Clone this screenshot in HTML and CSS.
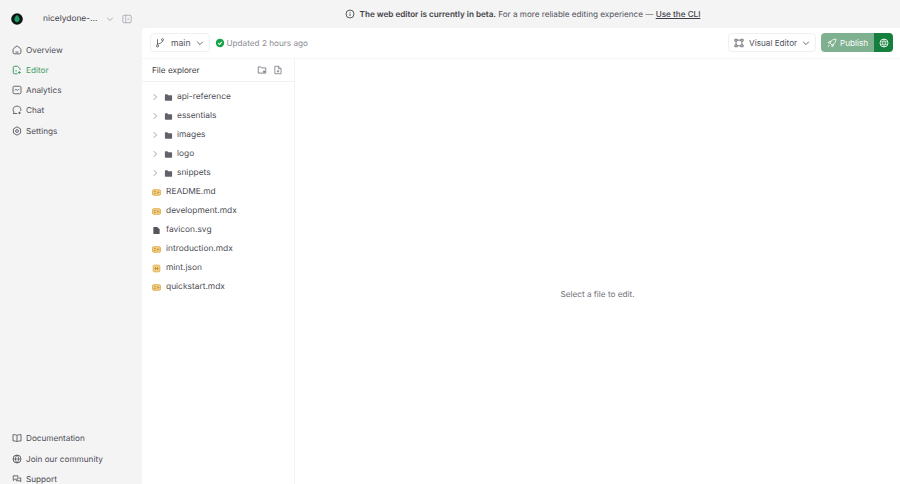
FILE: index.html
```html
<!DOCTYPE html>
<html lang="en">
<head>
<meta charset="utf-8">
<title>Editor</title>
<link rel="stylesheet" href="styles.css">
</head>
<body>
<svg class="defs" width="0" height="0" aria-hidden="true">
  <defs>
    <symbol id="chev-r" viewBox="0 0 10 10"><path d="M3.5 1.5 7 5 3.5 8.500" fill="none" stroke="currentColor" stroke-width="1"/></symbol>
    <symbol id="chev-d" viewBox="0 0 10 10"><path d="M1.500 3.500 5 7l3.500-3.500" fill="none" stroke="currentColor" stroke-width="1.100"/></symbol>
    <symbol id="folder" viewBox="0 0 10 10"><path d="M1 2.200c0-.4.300-.7.700-.7h2l1 1.100h3.600c.4 0 .7.300.7.700v4.500c0 .4-.3.700-.7.700H1.700c-.4 0-.7-.3-.7-.7z" fill="currentColor"/></symbol>
    <symbol id="md" viewBox="0 0 10 10"><rect x=".6" y="1.900" width="8.800" height="6.200" rx="1.300" fill="#f3d391" stroke="#e0a53c" stroke-width=".9"/><path d="M2.200 4h2M2.200 6h2M6 4v2M7.500 4v2" stroke="#b8801c" stroke-width=".9"/></symbol>
    <symbol id="json" viewBox="0 0 10 10"><rect x="1.300" y="1.300" width="7.400" height="7.400" rx="1.300" fill="#f3d391" stroke="#e0a53c" stroke-width=".9"/><path d="M3.800 3.200v3.600M6.200 3.200v3.600M3 5h4" stroke="#b8801c" stroke-width=".8"/></symbol>
    <symbol id="file" viewBox="0 0 10 10"><path d="M1.500 1.800c0-.5.300-.8.800-.8h3.500l2.700 2.700v4.500c0 .5-.3.800-.8.800H2.300c-.5 0-.8-.3-.8-.8z" fill="#55565c"/></symbol>
  </defs>
</svg>
<div class="app">
  <aside class="sidebar">
    <div class="org">
      <svg class="logo" viewBox="0 0 14 14"><circle cx="7" cy="7" r="6.800" fill="#0d1512"/><path d="M7 2.300C9.300 4.200 10.400 6.200 10 8c-.3 1.700-1.700 2.900-3 2.900S4.300 9.700 4 8C3.600 6.200 4.700 4.200 7 2.300z" fill="#1f9d66"/></svg>
      <span class="org-name">nicelydone-...</span>
      <svg class="org-chev"><use href="#chev-d"/></svg>
      <svg class="collapse" viewBox="0 0 12 12"><rect x="1" y="1.500" width="10" height="9" rx="1.500" fill="none" stroke="currentColor"/><path d="M4.500 1.500v9M8.300 4.500 6.800 6l1.500 1.500" fill="none" stroke="currentColor" stroke-width=".9"/></svg>
    </div>
    <nav class="nav">
      <a class="nav-item"><svg class="nav-icon" viewBox="0 0 12 12"><path d="M1.300 5.400c0-.5.200-.9.600-1.200L5 1.700c.6-.5 1.400-.5 2 0l3.100 2.500c.4.300.6.700.6 1.200v3.700c0 .9-.7 1.500-1.500 1.500H2.800c-.8 0-1.500-.6-1.500-1.500z M4.200 8.500h3.600" fill="none" stroke="currentColor"/></svg>Overview</a>
      <a class="nav-item active"><svg class="nav-icon" viewBox="0 0 12 12"><path d="M6.500 10.500H2.700c-.7 0-1.200-.5-1.200-1.200V2.700c0-.7.500-1.200 1.200-1.200h4l3 3v1.500" fill="none" stroke="currentColor" stroke-width="1.200"/><path d="M4 7h2M8.800 7.200v3.500M7 9h3.600" fill="none" stroke="currentColor" stroke-width="1.100"/></svg>Editor</a>
      <a class="nav-item"><svg class="nav-icon" viewBox="0 0 12 12"><rect x="1.200" y="1.500" width="9.600" height="9" rx="1.600" fill="none" stroke="currentColor"/><path d="M3.300 6.400 4.800 5l1.600 1.500L8.700 5" fill="none" stroke="currentColor" stroke-width=".9"/></svg>Analytics</a>
      <a class="nav-item"><svg class="nav-icon" viewBox="0 0 12 12"><path d="M6.300 10.200H1.500l.9-1.700C1.700 7.700 1.300 6.800 1.300 5.700 1.300 3.200 3.300 1.300 6 1.300s4.700 1.900 4.700 4.400c0 .5-.1 1-.3 1.500" fill="none" stroke="currentColor"/><path d="M9 8v3M7.500 9.500h3" stroke="currentColor"/></svg>Chat</a>
      <a class="nav-item"><svg class="nav-icon" viewBox="0 0 12 12"><path d="M6 1 10.300 3.500v5L6 11 1.700 8.500v-5z" fill="none" stroke="currentColor" stroke-linejoin="round"/><circle cx="6" cy="6" r="1.700" fill="none" stroke="currentColor"/></svg>Settings</a>
    </nav>
    <nav class="nav nav-bottom">
      <a class="nav-item"><svg class="nav-icon" viewBox="0 0 12 12"><path d="M6 3C5 2.200 3.500 2 1.200 2v7.500c2.300 0 3.800.2 4.800 1 1-.8 2.500-1 4.800-1V2C8.500 2 7 2.200 6 3zM6 3v7.500" fill="none" stroke="currentColor"/></svg>Documentation</a>
      <a class="nav-item"><svg class="nav-icon" viewBox="0 0 12 12"><circle cx="6" cy="6" r="4.800" fill="none" stroke="currentColor"/><path d="M1.200 6h9.600M6 1.200c-2.500 3-2.500 6.600 0 9.600 2.500-3 2.500-6.600 0-9.600z" fill="none" stroke="currentColor" stroke-width=".9"/></svg>Join our community</a>
      <a class="nav-item"><svg class="nav-icon" viewBox="0 0 12 12"><path d="M1.500 2.200h5.600v4H3.300L1.500 7.800z M8.400 4.800h2.100v4.500l-1.400-1.200H5V7.400" fill="none" stroke="currentColor"/></svg>Support</a>
    </nav>
  </aside>
  <div class="right">
    <div class="banner">
      <svg class="banner-icon" viewBox="0 0 12 12"><circle cx="6" cy="6" r="4.800" fill="none" stroke="currentColor"/><path d="M6 5.400v3M6 3.400v1" stroke="currentColor"/></svg>
      <span><strong>The web editor is currently in beta.</strong> For a more reliable editing experience — <a class="cli">Use the CLI</a></span>
    </div>
    <main class="panel">
      <header class="toolbar">
        <button class="btn branch">
          <svg class="btn-icon" viewBox="0 0 12 12"><path d="M3 1.500v6.300M9 3.200C9 5.500 7 6 5 6.700 3.800 7.100 3 7.700 3 8.500" fill="none" stroke="currentColor"/><circle cx="3" cy="9.500" r="1.300" fill="none" stroke="currentColor"/><circle cx="9" cy="2" r="1.200" fill="none" stroke="currentColor"/></svg>
          <span>main</span>
          <svg class="chev"><use href="#chev-d"/></svg>
        </button>
        <svg class="status-dot" viewBox="0 0 10 10"><circle cx="5" cy="5" r="4.200" fill="#16a34a"/><path d="M3.100 5.100 4.500 6.400 6.900 3.800" fill="none" stroke="#fff" stroke-width="1.100"/></svg>
        <span class="status">Updated 2 hours ago</span>
        <div class="toolbar-right">
          <button class="btn visual">
            <svg class="btn-icon" viewBox="0 0 12 12"><path d="M2.500 2.600h7M2.500 9.400h7M2.500 2.600v6.800M9.500 2.600v6.800" fill="none" stroke="currentColor" stroke-width=".9"/><path d="M1 1.500h2.800v2.200H1zM8.200 1.500H11v2.200H8.200zM1 8.300h2.800v2.200H1zM8.200 8.300H11v2.200H8.200z" fill="#fff" stroke="currentColor" stroke-width=".9"/></svg>
            <span>Visual Editor</span>
            <svg class="chev"><use href="#chev-d"/></svg>
          </button>
          <div class="publish">
            <button class="publish-main">
              <svg class="btn-icon" viewBox="0 0 12 12"><path d="M10.800 1.200C7.500 1.400 5 2.800 3.600 6l2.400 2.400c3.200-1.400 4.600-3.900 4.800-7.200zM3.600 6H1.400l1.500-1.900h1.900M6 8.400v2.200l1.900-1.500V7.200M2.800 8.300l-1.500 2.400" fill="none" stroke="currentColor"/></svg>
              <span>Publish</span>
            </button>
            <button class="publish-globe">
              <svg class="btn-icon" viewBox="0 0 12 12"><circle cx="6" cy="6" r="4.800" fill="none" stroke="currentColor"/><path d="M1.400 4.500h9.200M1.400 7.500h9.200M6 1.200c-2.200 3-2.200 6.600 0 9.600 2.200-3 2.200-6.600 0-9.600z" fill="none" stroke="currentColor" stroke-width=".8"/></svg>
            </button>
          </div>
        </div>
      </header>
      <div class="workspace">
        <section class="explorer">
          <div class="explorer-head">
            <span>File explorer</span>
            <span class="head-actions">
              <svg viewBox="0 0 12 12"><path d="M1.500 2.300h3l1 1.200h5v6.200h-9z M8.500 6.500v3M7 8h3" fill="none" stroke="currentColor"/></svg>
              <svg viewBox="0 0 12 12"><path d="M2.200 1.500h4.500l3 3v6h-7.500z M6.500 1.500v3h3M4.500 7.500h3M6 6v3" fill="none" stroke="currentColor" stroke-width=".9"/></svg>
            </span>
          </div>
          <ul class="tree">
            <li class="row"><svg class="tw"><use href="#chev-r"/></svg><svg class="ico dir"><use href="#folder"/></svg>api-reference</li>
            <li class="row"><svg class="tw"><use href="#chev-r"/></svg><svg class="ico dir"><use href="#folder"/></svg>essentials</li>
            <li class="row"><svg class="tw"><use href="#chev-r"/></svg><svg class="ico dir"><use href="#folder"/></svg>images</li>
            <li class="row"><svg class="tw"><use href="#chev-r"/></svg><svg class="ico dir"><use href="#folder"/></svg>logo</li>
            <li class="row"><svg class="tw"><use href="#chev-r"/></svg><svg class="ico dir"><use href="#folder"/></svg>snippets</li>
            <li class="row"><svg class="ico"><use href="#md"/></svg>README.md</li>
            <li class="row"><svg class="ico"><use href="#md"/></svg>development.mdx</li>
            <li class="row"><svg class="ico"><use href="#file"/></svg>favicon.svg</li>
            <li class="row"><svg class="ico"><use href="#md"/></svg>introduction.mdx</li>
            <li class="row"><svg class="ico"><use href="#json"/></svg>mint.json</li>
            <li class="row"><svg class="ico"><use href="#md"/></svg>quickstart.mdx</li>
          </ul>
        </section>
        <section class="empty">Select a file to edit.</section>
      </div>
    </main>
  </div>
</div>
</body>
</html>
```

FILE: styles.css
```css
* { box-sizing: border-box; }
html, body { margin: 0; height: 100%; overflow: hidden; }
body { font-family: Inter, "Liberation Sans", sans-serif; font-size: 8.2px; color: #52525b; background: #f4f4f5; text-rendering: geometricPrecision; }
.defs { position: absolute; }
.app { display: flex; height: 484px; overflow: hidden; }
.sidebar { width: 142px; flex: none; display: flex; flex-direction: column; padding: 10px 11px 0 12px; }
.org { display: flex; align-items: center; height: 17px; white-space: nowrap; }
.logo { width: 12px; height: 12px; margin-left: -1.500px; flex: none; }
.org-name { width: 57px; margin-left: 20.500px; color: #3f3f46; font-size: 8.400px; }
.org-chev { width: 8px; height: 8px; margin-left: 9px; color: #a1a1aa; flex: none; }
.collapse { width: 10px; height: 10px; margin-left: 8px; color: #a1a1aa; flex: none; }
.nav { display: flex; flex-direction: column; margin-top: 12.500px; }
.nav-bottom { margin-top: auto; margin-bottom: -5px; }
.nav-item { display: flex; align-items: center; gap: 4px; height: 20.250px; color: #4c4c54; white-space: nowrap; }
.nav-item.active { color: #3f9d62; }
.nav-icon { width: 10px; height: 10px; flex: none; }
.right { flex: 1; min-width: 0; display: flex; flex-direction: column; }
.banner { height: 28px; flex: none; display: flex; align-items: center; justify-content: center; gap: 5px; padding-left: 3px; font-size: 8.150px; color: #52525b; }
.banner strong { font-weight: 600; color: #3f3f46; }
.banner-icon { width: 10px; height: 10px; color: #3f3f46; }
.cli { font-weight: 500; text-decoration: underline; color: #3f3f46; }
.panel { flex: 1; min-height: 0; background: #fff; display: flex; flex-direction: column; border-top-left-radius: 3px; }
.toolbar { height: 31px; flex: none; display: flex; align-items: center; padding: 0 7px 1px 8px; border-bottom: 1px solid #f6f6f7; }
.btn { font: inherit; color: #52525b; display: flex; align-items: center; height: 19px; background: #fff; border: 1px solid #f0f0f1; border-radius: 4px; padding: 0 5px 0 4px; white-space: nowrap; }
.btn-icon { width: 10px; height: 10px; flex: none; }
.chev { width: 8px; height: 8px; flex: none; margin-left: auto; }
.branch { width: 60px; font-size: 8.600px; }
.branch span { margin-left: 6px; }
.status-dot { width: 10px; height: 10px; margin-left: 5px; flex: none; }
.status { margin-left: 1.500px; color: #8b8b93; }
.toolbar-right { margin-left: auto; display: flex; align-items: center; gap: 5px; }
.visual { width: 88px; padding-left: 5px; }
.visual span { margin-left: 5px; }
.publish { display: flex; height: 19px; border-radius: 4px; overflow: hidden; }
.publish-main, .publish-globe { font: inherit; border: 0; color: #fff; display: flex; align-items: center; padding: 0; white-space: nowrap; }
.publish-main { width: 53px; background: #7fb08f; padding-left: 6px; gap: 3px; }
.publish-globe { width: 19px; background: #15803d; justify-content: center; }
.workspace { flex: 1; min-height: 0; display: flex; }
.explorer { width: 153px; flex: none; border-right: 1px solid #f2f2f3; }
.explorer-head { height: 23px; display: flex; align-items: center; justify-content: space-between; padding: 0 11px 1px 10px; color: #3f3f46; border-bottom: 1px solid #f2f2f3; }
.head-actions { display: flex; gap: 6px; color: #71717a; }
.head-actions svg { width: 10px; height: 10px; }
.tree { list-style: none; margin: 5.500px 0 0; padding: 0 0 0 10px; font-size: 8.400px; }
.row { display: flex; align-items: center; height: 19px; color: #4c4c54; }
.tw { width: 8px; height: 8px; margin-left: -1px; margin-right: 5px; color: #8b8b93; flex: none; }
.ico { width: 9px; height: 9px; margin-right: 5px; flex: none; }
.ico.dir { color: #62636a; margin-right: 4px; }
.empty { flex: 1; display: flex; align-items: center; justify-content: center; padding-top: 45px; color: #71717a; }
```
